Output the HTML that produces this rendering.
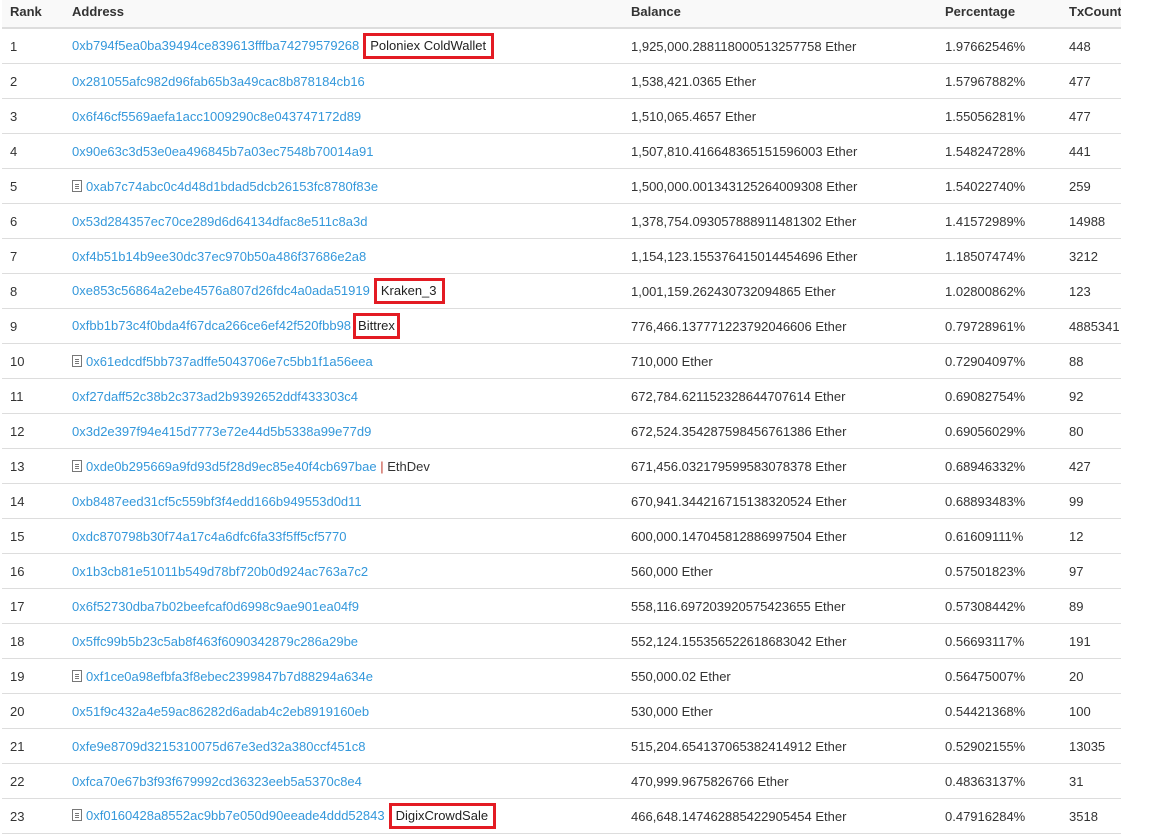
<!DOCTYPE html>
<html><head><meta charset="utf-8"><style>
body{margin:0;background:#fff;font-family:"Liberation Sans",Arial,sans-serif;font-size:13px;color:#333;width:1156px;height:836px;overflow:hidden}
table{position:absolute;left:2px;top:-1px;width:1119px;border-collapse:collapse;table-layout:fixed}
td,th{padding:0 0 0 8px;height:34px;border-bottom:1px solid #ddd;text-align:left;white-space:nowrap;overflow:visible}
td:last-child,th:last-child{overflow:hidden}
th{background:#f9f9f9;font-weight:bold;border-bottom:2px solid #ddd;vertical-align:top;padding-top:5px;height:23px}
a{color:#3498db;text-decoration:none}
.b{display:inline-block;border:3px solid #e31b23;padding:3px 5px 3px 4px;margin-left:4px;color:#222;line-height:14px;vertical-align:baseline}
.ic{display:inline-block;width:8px;height:10px;border:1px solid #777;vertical-align:-1px;margin-right:4px;position:relative;background:linear-gradient(#777,#777) 2px 3px/4px 1px no-repeat,linear-gradient(#777,#777) 2px 5px/4px 1px no-repeat,linear-gradient(#777,#777) 2px 7px/4px 1px no-repeat}
.s{color:#c0392b}
</style></head><body>
<table>
<colgroup><col style="width:62px"><col style="width:559px"><col style="width:314px"><col style="width:124px"><col></colgroup>
<tr><th>Rank</th><th>Address</th><th>Balance</th><th>Percentage</th><th>TxCount</th></tr>
<tr><td>1</td><td><a>0xb794f5ea0ba39494ce839613fffba74279579268</a><span class="b">Poloniex ColdWallet</span></td><td>1,925,000.288118000513257758 Ether</td><td>1.97662546%</td><td>448</td></tr>
<tr><td>2</td><td><a>0x281055afc982d96fab65b3a49cac8b878184cb16</a></td><td>1,538,421.0365 Ether</td><td>1.57967882%</td><td>477</td></tr>
<tr><td>3</td><td><a>0x6f46cf5569aefa1acc1009290c8e043747172d89</a></td><td>1,510,065.4657 Ether</td><td>1.55056281%</td><td>477</td></tr>
<tr><td>4</td><td><a>0x90e63c3d53e0ea496845b7a03ec7548b70014a91</a></td><td>1,507,810.416648365151596003 Ether</td><td>1.54824728%</td><td>441</td></tr>
<tr><td>5</td><td><span class="ic"></span><a>0xab7c74abc0c4d48d1bdad5dcb26153fc8780f83e</a></td><td>1,500,000.001343125264009308 Ether</td><td>1.54022740%</td><td>259</td></tr>
<tr><td>6</td><td><a>0x53d284357ec70ce289d6d64134dfac8e511c8a3d</a></td><td>1,378,754.093057888911481302 Ether</td><td>1.41572989%</td><td>14988</td></tr>
<tr><td>7</td><td><a>0xf4b51b14b9ee30dc37ec970b50a486f37686e2a8</a></td><td>1,154,123.155376415014454696 Ether</td><td>1.18507474%</td><td>3212</td></tr>
<tr><td>8</td><td><a>0xe853c56864a2ebe4576a807d26fdc4a0ada51919</a><span class="b">Kraken_3</span></td><td>1,001,159.262430732094865 Ether</td><td>1.02800862%</td><td>123</td></tr>
<tr><td>9</td><td><a>0xfbb1b73c4f0bda4f67dca266ce6ef42f520fbb98</a><span class="b" style="margin-left:2px;padding:3px 2px">Bittrex</span></td><td>776,466.137771223792046606 Ether</td><td>0.79728961%</td><td>4885341</td></tr>
<tr><td>10</td><td><span class="ic"></span><a>0x61edcdf5bb737adffe5043706e7c5bb1f1a56eea</a></td><td>710,000 Ether</td><td>0.72904097%</td><td>88</td></tr>
<tr><td>11</td><td><a>0xf27daff52c38b2c373ad2b9392652ddf433303c4</a></td><td>672,784.621152328644707614 Ether</td><td>0.69082754%</td><td>92</td></tr>
<tr><td>12</td><td><a>0x3d2e397f94e415d7773e72e44d5b5338a99e77d9</a></td><td>672,524.354287598456761386 Ether</td><td>0.69056029%</td><td>80</td></tr>
<tr><td>13</td><td><span class="ic"></span><a>0xde0b295669a9fd93d5f28d9ec85e40f4cb697bae</a> <span class="s">|</span> EthDev</td><td>671,456.032179599583078378 Ether</td><td>0.68946332%</td><td>427</td></tr>
<tr><td>14</td><td><a>0xb8487eed31cf5c559bf3f4edd166b949553d0d11</a></td><td>670,941.344216715138320524 Ether</td><td>0.68893483%</td><td>99</td></tr>
<tr><td>15</td><td><a>0xdc870798b30f74a17c4a6dfc6fa33f5ff5cf5770</a></td><td>600,000.147045812886997504 Ether</td><td>0.61609111%</td><td>12</td></tr>
<tr><td>16</td><td><a>0x1b3cb81e51011b549d78bf720b0d924ac763a7c2</a></td><td>560,000 Ether</td><td>0.57501823%</td><td>97</td></tr>
<tr><td>17</td><td><a>0x6f52730dba7b02beefcaf0d6998c9ae901ea04f9</a></td><td>558,116.697203920575423655 Ether</td><td>0.57308442%</td><td>89</td></tr>
<tr><td>18</td><td><a>0x5ffc99b5b23c5ab8f463f6090342879c286a29be</a></td><td>552,124.155356522618683042 Ether</td><td>0.56693117%</td><td>191</td></tr>
<tr><td>19</td><td><span class="ic"></span><a>0xf1ce0a98efbfa3f8ebec2399847b7d88294a634e</a></td><td>550,000.02 Ether</td><td>0.56475007%</td><td>20</td></tr>
<tr><td>20</td><td><a>0x51f9c432a4e59ac86282d6adab4c2eb8919160eb</a></td><td>530,000 Ether</td><td>0.54421368%</td><td>100</td></tr>
<tr><td>21</td><td><a>0xfe9e8709d3215310075d67e3ed32a380ccf451c8</a></td><td>515,204.654137065382414912 Ether</td><td>0.52902155%</td><td>13035</td></tr>
<tr><td>22</td><td><a>0xfca70e67b3f93f679992cd36323eeb5a5370c8e4</a></td><td>470,999.9675826766 Ether</td><td>0.48363137%</td><td>31</td></tr>
<tr><td>23</td><td><span class="ic"></span><a>0xf0160428a8552ac9bb7e050d90eeade4ddd52843</a><span class="b">DigixCrowdSale</span></td><td>466,648.147462885422905454 Ether</td><td>0.47916284%</td><td>3518</td></tr>
</table>
</body></html>
